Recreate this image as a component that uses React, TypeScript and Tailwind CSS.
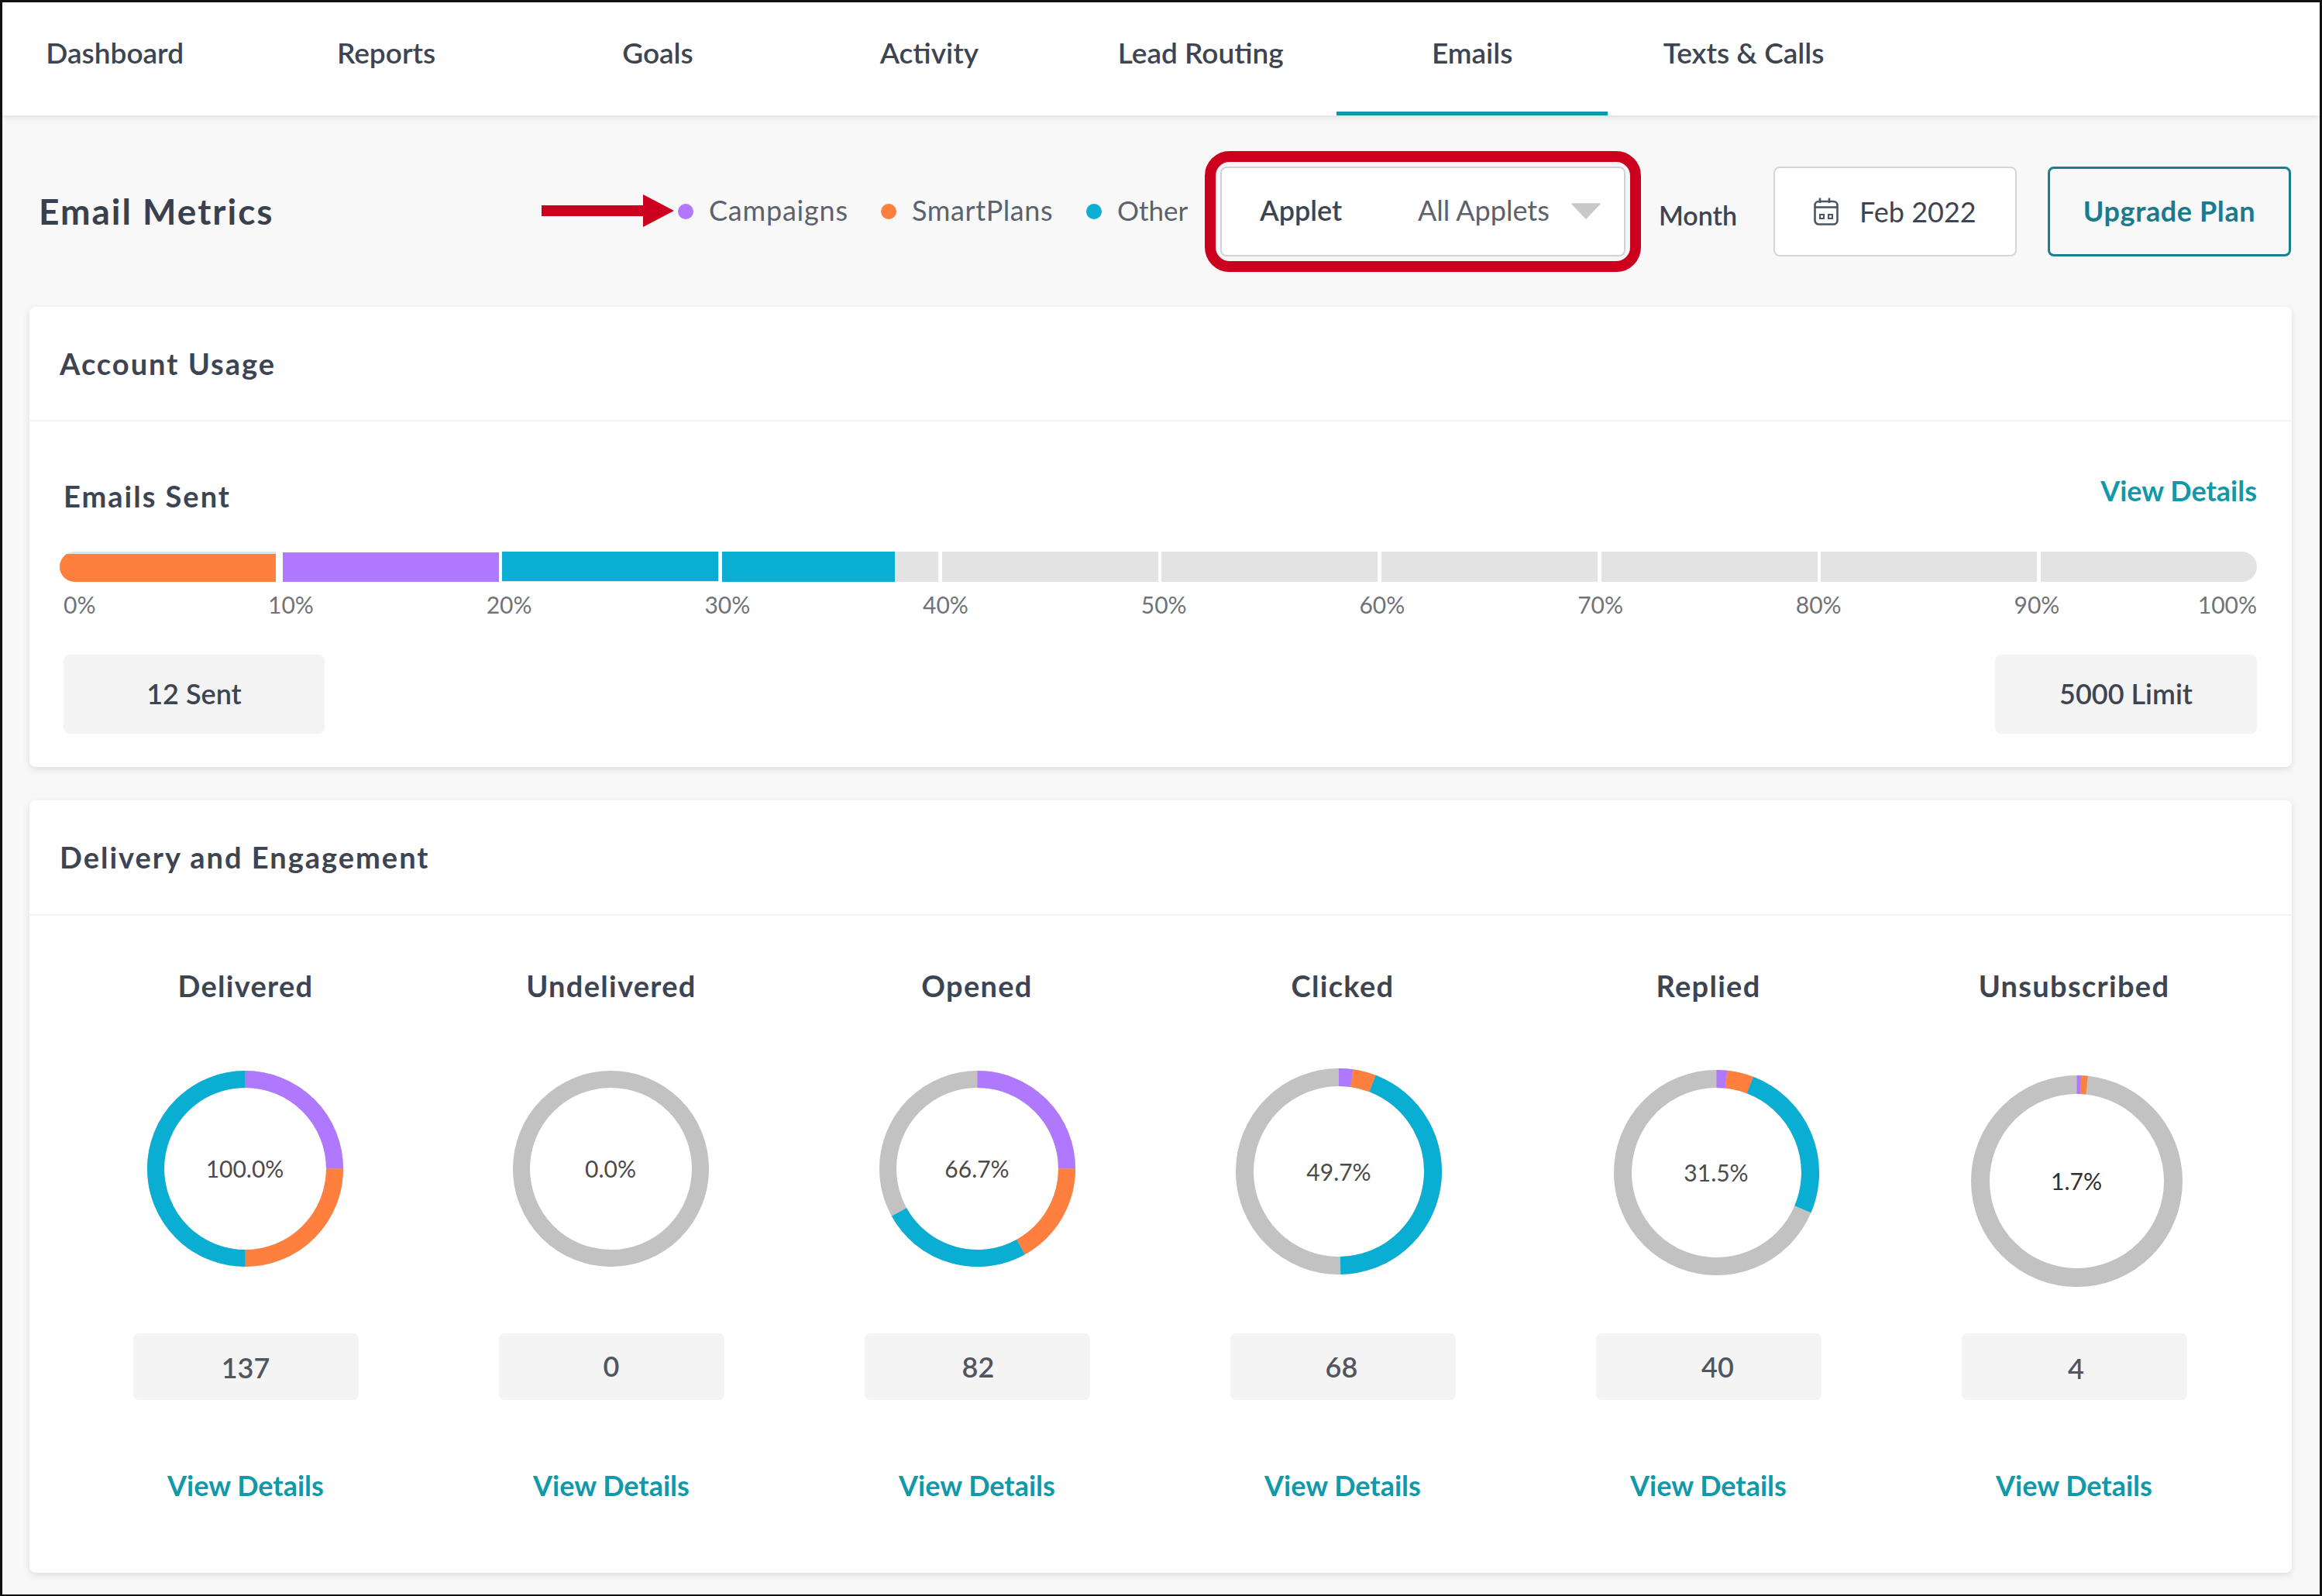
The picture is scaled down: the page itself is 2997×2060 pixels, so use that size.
import React from 'react';

const PURPLE = '#b078ff';
const ORANGE = '#ff7f3f';
const CYAN = '#0aaed3';
const GRAY = '#c2c2c2';

const tabs = ['Dashboard', 'Reports', 'Goals', 'Activity', 'Lead Routing', 'Emails', 'Texts & Calls'];
const legend = [
  { label: 'Campaigns', dot: 'bg-[#b078ff]', width: 'w-[262px]', text: 'tracking-[0.8px]' },
  { label: 'SmartPlans', dot: 'bg-[#ff7f3f]', width: 'w-[265px]', text: 'tracking-[0.6px]' },
  { label: 'Other', dot: 'bg-[#0aaed3]', width: 'w-[140px]', text: 'text-[35px]' },
];
const scale = ['10%', '20%', '30%', '40%', '50%', '60%', '70%', '80%', '90%'];

interface Slice {
  from: number;
  to: number;
  color: string;
}

interface Metric {
  title: string;
  percent: string;
  count: string;
  size: number;
  stroke: number;
  // where the ring sits in its 300px slot
  ringClass: string;
  countClass: string;
  percentClass: string;
  slices: Slice[];
}

const metrics: Metric[] = [
  {
    title: 'Delivered',
    percent: '100.0%',
    count: '137',
    size: 253,
    stroke: 22,
    ringClass: 'mt-[6px] -translate-x-px',
    countClass: 'pt-[2px]',
    percentClass: 'text-[#4b4b4b]',
    slices: [
      { from: 0, to: 90, color: PURPLE },
      { from: 90, to: 180, color: ORANGE },
      { from: 180, to: 360, color: CYAN },
    ],
  },
  {
    title: 'Undelivered',
    percent: '0.0%',
    count: '0',
    size: 253,
    stroke: 22,
    ringClass: 'mt-[6px] -translate-x-[1px]',
    countClass: '-mt-[3px]',
    percentClass: 'text-[#4b4b4b]',
    slices: [],
  },
  {
    title: 'Opened',
    percent: '66.7%',
    count: '82',
    size: 253,
    stroke: 22,
    ringClass: 'mt-[6px]',
    countClass: 'pl-[3px]',
    percentClass: 'text-[#4b4b4b]',
    slices: [
      { from: 0, to: 90, color: PURPLE },
      { from: 90, to: 151, color: ORANGE },
      { from: 151, to: 241, color: CYAN },
    ],
  },
  {
    title: 'Clicked',
    percent: '49.7%',
    count: '68',
    size: 266,
    stroke: 23,
    ringClass: 'mt-[3px] -translate-x-[5px]',
    countClass: '-ml-[3px]',
    percentClass: 'text-[#4b4b4b]',
    slices: [
      { from: 0, to: 8, color: PURPLE },
      { from: 8, to: 21, color: ORANGE },
      { from: 21, to: 179, color: CYAN },
    ],
  },
  {
    title: 'Replied',
    percent: '31.5%',
    count: '40',
    size: 265,
    stroke: 23,
    ringClass: 'mt-[5px] translate-x-[10px]',
    countClass: 'pl-[24px]',
    percentClass: 'text-[#4b4b4b]',
    slices: [
      { from: 0, to: 6, color: PURPLE },
      { from: 6, to: 21, color: ORANGE },
      { from: 21, to: 113, color: CYAN },
    ],
  },
  {
    title: 'Unsubscribed',
    percent: '1.7%',
    count: '4',
    size: 273,
    stroke: 24,
    ringClass: 'mt-[12px] translate-x-[3px]',
    countClass: 'pt-[3px] pl-[5px]',
    percentClass: 'text-[#2f2f2f]',
    slices: [
      { from: 0, to: 2.5, color: PURPLE },
      { from: 2.5, to: 6, color: ORANGE },
    ],
  },
];

function Donut({ metric }: { metric: Metric }) {
  const { size, stroke, slices } = metric;
  const c = size / 2;
  const r = c - stroke / 2;

  const point = (deg: number) => {
    const a = ((deg - 90) * Math.PI) / 180;
    return `${c + r * Math.cos(a)} ${c + r * Math.sin(a)}`;
  };

  return (
    <div className={`relative shrink-0 ${metric.ringClass}`} style={{ width: size, height: size }}>
      <svg width={size} height={size} viewBox={`0 0 ${size} ${size}`} fill="none">
        <circle cx={c} cy={c} r={r} stroke={GRAY} strokeWidth={stroke} />
        {slices.map((s) => (
          <path
            key={s.from}
            d={`M ${point(s.from)} A ${r} ${r} 0 ${s.to - s.from > 180 ? 1 : 0} 1 ${point(s.to)}`}
            stroke={s.color}
            strokeWidth={stroke}
          />
        ))}
      </svg>
      <div className={`absolute inset-0 flex items-center justify-center text-[30px] ${metric.percentClass}`}>
        {metric.percent}
      </div>
    </div>
  );
}

function CalendarIcon() {
  return (
    <svg width="32" height="36" viewBox="0 0 32 36" fill="none" stroke="#4b5563" strokeWidth="2.6">
      <rect x="1.5" y="5" width="29" height="29.5" rx="5" />
      <path d="M1.5 12.5H30.5" />
      <path d="M8 0.5V7M20 0.5V7" />
      <rect x="8" y="22" width="5" height="5" strokeWidth="2" />
      <rect x="19" y="22" width="5" height="5" strokeWidth="2" />
    </svg>
  );
}

function App() {
  return (
    <div className="h-screen w-full box-border overflow-hidden border-[3px] border-b-2 border-[#111111] bg-[#f8f8f8] font-['Lato',sans-serif] text-[#3d4452]">
      {/* Tabs */}
      <nav className="relative z-10 h-[146px] bg-white shadow-[0_3px_6px_rgba(60,64,80,0.12)]">
        <div className="flex h-full -ml-[30px]">
          {tabs.map((tab) => (
            <div
              key={tab}
              className={`w-[350.4px] shrink-0 pt-[43px] text-center text-[37px] leading-[44px] font-semibold ${
                tab === 'Emails' ? 'border-b-[5px] border-[#0e97a6]' : ''
              }`}
            >
              {tab}
            </div>
          ))}
        </div>
      </nav>

      {/* Page header */}
      <div className="relative flex h-[247px] items-center pl-[47px]">
        <h1 className="w-[825px] shrink-0 text-[46px] font-bold tracking-[2px] text-[#39414f]">Email Metrics</h1>

        {/* Annotation arrow */}
        <svg className="absolute left-[696px] top-[102px]" width="172" height="42" viewBox="0 0 172 42">
          <path d="M0 14H131V0L171 21L131 42V28H0Z" fill="#cc001e" />
        </svg>

        <div className="flex w-[680px] shrink-0 items-center pb-[3px] text-[36px] text-[#5c626c]">
          {legend.map((item) => (
            <div key={item.label} className={`flex items-center gap-[20px] ${item.width}`}>
              <span className={`mt-[3px] h-[20px] w-[20px] rounded-full ${item.dot}`} />
              <span className={item.text}>{item.label}</span>
            </div>
          ))}
        </div>

        <div className="h-[156px] w-[563px] shrink-0 box-border rounded-[32px] border-[14px] border-[#cc001e] bg-[#f6f6f6] p-[6px]">
          <div className="flex h-full items-center rounded-[8px] border-2 border-[#cfd2d8] bg-white pb-[3px] pl-[49px]">
            <span className="w-[204px] text-[36px] font-semibold">Applet</span>
            <span className="w-[198px] text-[36px] text-[#5c626c]">All Applets</span>
            <svg className="mt-[3px]" width="38" height="21" viewBox="0 0 38 21">
              <path d="M1 1H37L19 20Z" fill="#c8c8c8" stroke="#c8c8c8" strokeWidth="1.5" strokeLinejoin="round" />
            </svg>
          </div>
        </div>

        <div className="w-[171px] shrink-0 pl-[23px] pt-[10px] text-[34px] font-semibold">Month</div>

        <div className="box-border flex h-[116px] w-[314px] shrink-0 items-center gap-[27px] rounded-[8px] border-2 border-[#d4d6db] bg-white pl-[50px]">
          <CalendarIcon />
          <span className="text-[36px]">Feb 2022</span>
        </div>

        <div className="ml-[40px] box-border flex h-[116px] w-[314px] shrink-0 items-center justify-center rounded-[8px] border-[3px] border-[#1b7f90] pb-[2px] text-[36px] font-bold tracking-[0.6px] text-[#1b7a8c]">
          Upgrade Plan
        </div>
      </div>

      {/* Account usage */}
      <section className="ml-[35px] h-[594px] w-[2920px] rounded-[8px] bg-white shadow-[0_3px_10px_rgba(60,64,80,0.14)]">
        <div className="flex h-[148px] items-center border-b-2 border-[#f3f3f3] pl-[39px] text-[38px] font-bold tracking-[2px]">
          Account Usage
        </div>
        <div className="pl-[39px] pr-[45px]">
          <div className="flex h-[168px] justify-between pt-[64px]">
            <div className="pl-[5px] pt-[9px] text-[38px] font-bold leading-[46px] tracking-[2px]">Emails Sent</div>
            <div className="pt-[2px] text-[36px] font-bold leading-[46px] text-[#1099a8]">View Details</div>
          </div>

          <div className="flex h-[39px] gap-[4.5px] overflow-hidden rounded-full">
            <div className="flex-1 bg-[#e3e3e3]">
              <div className="mt-[3px] h-[36px] bg-[#ff7f3f]" />
            </div>
            <div className="flex-1 pl-[4px]">
              <div className="mt-px h-[38px] bg-[#b078ff]" />
            </div>
            <div className="flex-1 bg-[#e3e3e3]">
              <div className="h-[38px] bg-[#0aaed3]" />
            </div>
            <div className="flex-1 bg-[#e3e3e3]">
              <div className="h-[39px] w-[80%] bg-[#0aaed3]" />
            </div>
            {[5, 6, 7, 8, 9, 10].map((n) => (
              <div key={n} className="flex-1 bg-[#e3e3e3]" />
            ))}
          </div>

          <div className="mt-[10px] grid grid-cols-[264px_repeat(9,281.7px)_minmax(0,1fr)] pl-[5px] text-[30px] leading-[38px] text-[#707378]">
            <span>0%</span>
            {scale.map((s) => (
              <span key={s}>{s}</span>
            ))}
            <span className="justify-self-end">100%</span>
          </div>

          <div className="mt-[46px] flex justify-between pl-[5px] text-[36px] font-semibold">
            <div className="flex h-[102px] w-[337px] items-center justify-center rounded-[8px] bg-[#f4f4f4] pb-[2px]">12 Sent</div>
            <div className="flex h-[102px] w-[338px] items-center justify-center rounded-[8px] bg-[#f4f4f4] pb-[2px]">5000 Limit</div>
          </div>
        </div>
      </section>

      {/* Delivery and engagement */}
      <section className="ml-[35px] mt-[43px] h-[997px] w-[2920px] rounded-[8px] bg-white shadow-[0_3px_10px_rgba(60,64,80,0.14)]">
        <div className="flex h-[149px] items-center border-b-2 border-[#f3f3f3] pl-[39px] text-[38px] font-bold tracking-[2px]">
          Delivery and Engagement
        </div>
        <div className="grid grid-cols-6 pl-[43px] pr-[45px]">
          {metrics.map((m) => (
            <div key={m.title} className="flex flex-col items-center">
              <div className="mt-[67px] text-[38px] font-bold leading-[46px] tracking-[1.3px]">{m.title}</div>
              <div className="mt-[81px] flex h-[345px] w-full justify-center">
                <Donut metric={m} />
              </div>
              <div className="flex h-[86px] w-[291px] items-center justify-center rounded-[8px] bg-[#f4f4f4] text-[36px] font-semibold text-[#50555f]">
                <span className={m.countClass}>{m.count}</span>
              </div>
              <div className="mt-[87px] text-[36px] font-bold leading-[46px] text-[#1099a8]">View Details</div>
            </div>
          ))}
        </div>
      </section>
    </div>
  );
}

export default App;
